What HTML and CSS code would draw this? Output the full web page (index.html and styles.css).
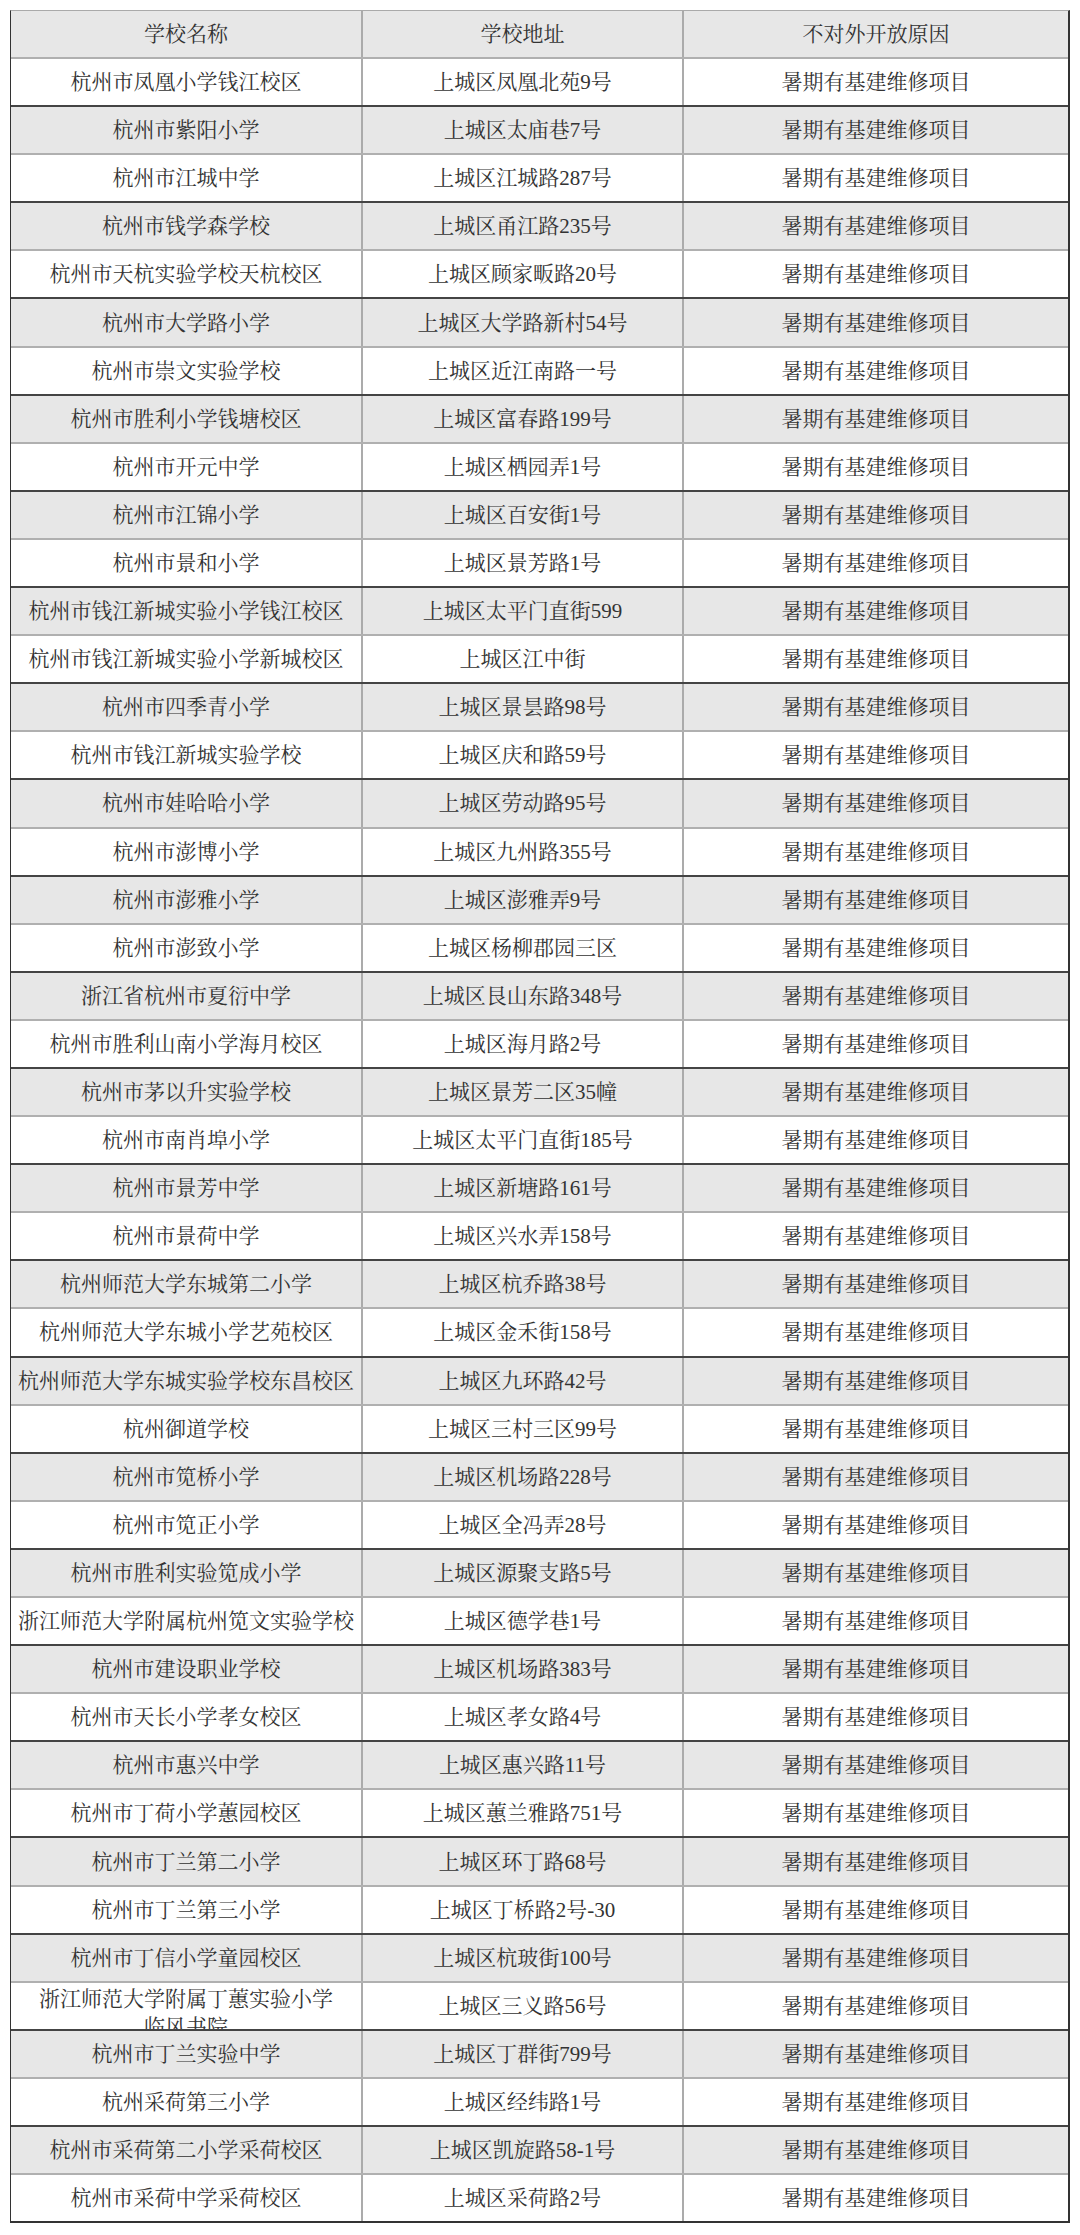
FILE: index.html
```html
<!DOCTYPE html>
<html lang="zh-CN">
<head>
<meta charset="utf-8">
<title>学校名单</title>
<link rel="stylesheet" href="styles.css">
</head>
<body>
<div class="table">
  <div class="row head"><div class="cell">学校名称</div><div class="cell">学校地址</div><div class="cell">不对外开放原因</div></div>
  <div class="row w"><div class="cell">杭州市凤凰小学钱江校区</div><div class="cell">上城区凤凰北苑9号</div><div class="cell">暑期有基建维修项目</div></div>
  <div class="row g"><div class="cell">杭州市紫阳小学</div><div class="cell">上城区太庙巷7号</div><div class="cell">暑期有基建维修项目</div></div>
  <div class="row w"><div class="cell">杭州市江城中学</div><div class="cell">上城区江城路287号</div><div class="cell">暑期有基建维修项目</div></div>
  <div class="row g"><div class="cell">杭州市钱学森学校</div><div class="cell">上城区甬江路235号</div><div class="cell">暑期有基建维修项目</div></div>
  <div class="row w"><div class="cell">杭州市天杭实验学校天杭校区</div><div class="cell">上城区顾家畈路20号</div><div class="cell">暑期有基建维修项目</div></div>
  <div class="row g"><div class="cell">杭州市大学路小学</div><div class="cell">上城区大学路新村54号</div><div class="cell">暑期有基建维修项目</div></div>
  <div class="row w"><div class="cell">杭州市崇文实验学校</div><div class="cell">上城区近江南路一号</div><div class="cell">暑期有基建维修项目</div></div>
  <div class="row g"><div class="cell">杭州市胜利小学钱塘校区</div><div class="cell">上城区富春路199号</div><div class="cell">暑期有基建维修项目</div></div>
  <div class="row w"><div class="cell">杭州市开元中学</div><div class="cell">上城区栖园弄1号</div><div class="cell">暑期有基建维修项目</div></div>
  <div class="row g"><div class="cell">杭州市江锦小学</div><div class="cell">上城区百安街1号</div><div class="cell">暑期有基建维修项目</div></div>
  <div class="row w"><div class="cell">杭州市景和小学</div><div class="cell">上城区景芳路1号</div><div class="cell">暑期有基建维修项目</div></div>
  <div class="row g"><div class="cell">杭州市钱江新城实验小学钱江校区</div><div class="cell">上城区太平门直街599</div><div class="cell">暑期有基建维修项目</div></div>
  <div class="row w"><div class="cell">杭州市钱江新城实验小学新城校区</div><div class="cell">上城区江中街</div><div class="cell">暑期有基建维修项目</div></div>
  <div class="row g"><div class="cell">杭州市四季青小学</div><div class="cell">上城区景昙路98号</div><div class="cell">暑期有基建维修项目</div></div>
  <div class="row w"><div class="cell">杭州市钱江新城实验学校</div><div class="cell">上城区庆和路59号</div><div class="cell">暑期有基建维修项目</div></div>
  <div class="row g"><div class="cell">杭州市娃哈哈小学</div><div class="cell">上城区劳动路95号</div><div class="cell">暑期有基建维修项目</div></div>
  <div class="row w"><div class="cell">杭州市澎博小学</div><div class="cell">上城区九州路355号</div><div class="cell">暑期有基建维修项目</div></div>
  <div class="row g"><div class="cell">杭州市澎雅小学</div><div class="cell">上城区澎雅弄9号</div><div class="cell">暑期有基建维修项目</div></div>
  <div class="row w"><div class="cell">杭州市澎致小学</div><div class="cell">上城区杨柳郡园三区</div><div class="cell">暑期有基建维修项目</div></div>
  <div class="row g"><div class="cell">浙江省杭州市夏衍中学</div><div class="cell">上城区艮山东路348号</div><div class="cell">暑期有基建维修项目</div></div>
  <div class="row w"><div class="cell">杭州市胜利山南小学海月校区</div><div class="cell">上城区海月路2号</div><div class="cell">暑期有基建维修项目</div></div>
  <div class="row g"><div class="cell">杭州市茅以升实验学校</div><div class="cell">上城区景芳二区35幢</div><div class="cell">暑期有基建维修项目</div></div>
  <div class="row w"><div class="cell">杭州市南肖埠小学</div><div class="cell">上城区太平门直街185号</div><div class="cell">暑期有基建维修项目</div></div>
  <div class="row g"><div class="cell">杭州市景芳中学</div><div class="cell">上城区新塘路161号</div><div class="cell">暑期有基建维修项目</div></div>
  <div class="row w"><div class="cell">杭州市景荷中学</div><div class="cell">上城区兴水弄158号</div><div class="cell">暑期有基建维修项目</div></div>
  <div class="row g"><div class="cell">杭州师范大学东城第二小学</div><div class="cell">上城区杭乔路38号</div><div class="cell">暑期有基建维修项目</div></div>
  <div class="row w"><div class="cell">杭州师范大学东城小学艺苑校区</div><div class="cell">上城区金禾街158号</div><div class="cell">暑期有基建维修项目</div></div>
  <div class="row g"><div class="cell">杭州师范大学东城实验学校东昌校区</div><div class="cell">上城区九环路42号</div><div class="cell">暑期有基建维修项目</div></div>
  <div class="row w"><div class="cell">杭州御道学校</div><div class="cell">上城区三村三区99号</div><div class="cell">暑期有基建维修项目</div></div>
  <div class="row g"><div class="cell">杭州市笕桥小学</div><div class="cell">上城区机场路228号</div><div class="cell">暑期有基建维修项目</div></div>
  <div class="row w"><div class="cell">杭州市笕正小学</div><div class="cell">上城区全冯弄28号</div><div class="cell">暑期有基建维修项目</div></div>
  <div class="row g"><div class="cell">杭州市胜利实验笕成小学</div><div class="cell">上城区源聚支路5号</div><div class="cell">暑期有基建维修项目</div></div>
  <div class="row w"><div class="cell">浙江师范大学附属杭州笕文实验学校</div><div class="cell">上城区德学巷1号</div><div class="cell">暑期有基建维修项目</div></div>
  <div class="row g"><div class="cell">杭州市建设职业学校</div><div class="cell">上城区机场路383号</div><div class="cell">暑期有基建维修项目</div></div>
  <div class="row w"><div class="cell">杭州市天长小学孝女校区</div><div class="cell">上城区孝女路4号</div><div class="cell">暑期有基建维修项目</div></div>
  <div class="row g"><div class="cell">杭州市惠兴中学</div><div class="cell">上城区惠兴路11号</div><div class="cell">暑期有基建维修项目</div></div>
  <div class="row w"><div class="cell">杭州市丁荷小学蕙园校区</div><div class="cell">上城区蕙兰雅路751号</div><div class="cell">暑期有基建维修项目</div></div>
  <div class="row g"><div class="cell">杭州市丁兰第二小学</div><div class="cell">上城区环丁路68号</div><div class="cell">暑期有基建维修项目</div></div>
  <div class="row w"><div class="cell">杭州市丁兰第三小学</div><div class="cell">上城区丁桥路2号-30</div><div class="cell">暑期有基建维修项目</div></div>
  <div class="row g"><div class="cell">杭州市丁信小学童园校区</div><div class="cell">上城区杭玻街100号</div><div class="cell">暑期有基建维修项目</div></div>
  <div class="row w"><div class="cell two">浙江师范大学附属丁蕙实验小学<br>临风书院</div><div class="cell">上城区三义路56号</div><div class="cell">暑期有基建维修项目</div></div>
  <div class="row g"><div class="cell">杭州市丁兰实验中学</div><div class="cell">上城区丁群街799号</div><div class="cell">暑期有基建维修项目</div></div>
  <div class="row w"><div class="cell">杭州采荷第三小学</div><div class="cell">上城区经纬路1号</div><div class="cell">暑期有基建维修项目</div></div>
  <div class="row g"><div class="cell">杭州市采荷第二小学采荷校区</div><div class="cell">上城区凯旋路58-1号</div><div class="cell">暑期有基建维修项目</div></div>
  <div class="row w last"><div class="cell">杭州市采荷中学采荷校区</div><div class="cell">上城区采荷路2号</div><div class="cell">暑期有基建维修项目</div></div>
</div>
</body>
</html>
```

FILE: styles.css
```css
html, body {
  margin: 0;
  padding: 0;
  background: #ffffff;
}

body {
  font-family: "Liberation Serif", "Noto Serif CJK SC", "Noto Sans CJK SC", serif;
  font-size: 21px;
  line-height: 28px;
  color: #333333;
}

.table {
  margin: 10px 0 0 10px;
  width: 1060px;
  box-sizing: border-box;
  border-top: 1px solid #aaaaaa;
  border-left: 1px solid #333333;
  border-right: 2px solid #333333;
  border-bottom: 2px solid #333333;
}

.row {
  display: grid;
  grid-template-columns: 352px 321px 1fr;
  height: 48.1px;
  box-sizing: border-box;
  overflow: hidden;
}

.row.head {
  height: 48px;
  background: #e7e7e7;
  border-bottom: 2px solid #b0b0b0;
}

.row.g {
  background: #e7e7e7;
  border-bottom: 2px solid #b0b0b0;
}

.row.w {
  background: #ffffff;
  border-bottom: 2px solid #444444;
}

.row.last {
  border-bottom: none;
  height: 46.1px;
}

.cell {
  display: flex;
  align-items: center;
  justify-content: center;
  text-align: center;
  border-right: 2px solid #ababab;
  overflow: hidden;
  white-space: nowrap;
}

.cell:last-child {
  border-right: none;
}

.cell.two {
  display: block;
  padding-top: 2px;
}
```
